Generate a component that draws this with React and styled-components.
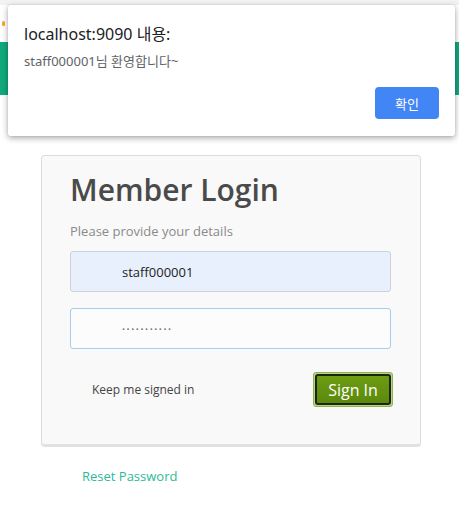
import React from "react";
import styled, { createGlobalStyle } from "styled-components";

const GlobalStyle = createGlobalStyle`
  html, body {
    margin: 0;
    padding: 0;
    background: #ffffff;
  }
  body {
    font-family: "Open Sans", "Noto Sans", sans-serif;
  }
`;

const App = () => {
  return (
    <Page>
      <GlobalStyle />
      <TopStrip />
      <Header>
        <Dot />
      </Header>
      <NavBar />
      <Main>
        <LoginCard>
          <Title>Member Login</Title>
          <Subtitle>Please provide your details</Subtitle>
          <Field autofilled>
            <FieldText>staff000001</FieldText>
          </Field>
          <Field focused>
            <FieldText dots>•••••••••••</FieldText>
          </Field>
          <ActionRow>
            <KeepLabel>Keep me signed in</KeepLabel>
            <SignInOuter>
              <SignInButton>Sign In</SignInButton>
            </SignInOuter>
          </ActionRow>
        </LoginCard>
        <ResetLink>Reset Password</ResetLink>
      </Main>

      <Alert>
        <AlertTitle>localhost:9090 내용:</AlertTitle>
        <AlertMessage>staff000001님 환영합니다~</AlertMessage>
        <AlertFooter>
          <AlertButton>확인</AlertButton>
        </AlertFooter>
      </Alert>
    </Page>
  );
};

export default App;

const Page = styled.div`
  position: relative;
  width: 459px;
  height: 514px;
  overflow: hidden;
  background: #ffffff;
`;

const TopStrip = styled.div`
  height: 5px;
  background: #f1f3f4;
`;

const Header = styled.div`
  height: 37px;
  display: flex;
  align-items: center;
  padding-left: 2px;
`;

const Dot = styled.div`
  width: 3px;
  height: 5px;
  border-radius: 2px;
  background: #f5a623;
`;

const NavBar = styled.div`
  height: 53px;
  background: #11a97c;
`;

const Main = styled.div`
  padding: 60px 0 0 41px;
`;

const LoginCard = styled.div`
  width: 350px;
  padding: 14px 0 37px 28px;
  background: #f9f9f9;
  border: 1px solid #dcdcdc;
  border-bottom: 3px solid #e2e2e2;
  border-radius: 4px;
`;

const Title = styled.h1`
  margin: 0;
  font-family: "Open Sans", sans-serif;
  font-size: 30px;
  line-height: 40px;
  font-weight: 600;
  color: #4a4a4a;
`;

const Subtitle = styled.p`
  margin: 12px 0 0;
  font-size: 13px;
  line-height: 18px;
  color: #8a8a8a;
`;

const Field = styled.div`
  box-sizing: border-box;
  width: 321px;
  height: 41px;
  margin-top: ${(p) => (p.focused ? "16px" : "11px")};
  display: flex;
  align-items: center;
  padding-left: 51px;
  border-radius: 3px;
  border: 1px solid ${(p) => (p.focused ? "#a6cdee" : "#cfd3d8")};
  background: ${(p) => (p.autofilled ? "#e8f0fe" : "#fcfcfc")};
`;

const FieldText = styled.span`
  font-size: ${(p) => (p.dots ? "8px" : "13px")};
  letter-spacing: ${(p) => (p.dots ? "1.6px" : "0")};
  color: ${(p) => (p.dots ? "#777" : "#222")};
`;

const ActionRow = styled.div`
  display: flex;
  align-items: center;
  justify-content: space-between;
  width: 323px;
  margin-top: 23px;
`;

const KeepLabel = styled.span`
  margin-left: 22px;
  font-size: 12px;
  color: #444;
`;

const SignInOuter = styled.div`
  padding: 1px;
  border: 1px solid #8db34a;
  border-radius: 3px;
  background: #b9d48a;
`;

const SignInButton = styled.button`
  display: block;
  width: 76px;
  height: 31px;
  padding: 0;
  border: 2px solid #1d2410;
  border-radius: 3px;
  background: linear-gradient(#6d9c15, #5c890c);
  color: #ffffff;
  font-family: "Open Sans", sans-serif;
  font-size: 16px;
  cursor: pointer;
`;

const ResetLink = styled.a`
  display: block;
  margin: 20px 0 0 41px;
  font-size: 13px;
  color: #2fb99a;
  text-decoration: none;
`;

const Alert = styled.div`
  position: absolute;
  top: 5px;
  left: 8px;
  box-sizing: border-box;
  width: 447px;
  height: 131px;
  padding: 18px 16px 0 16px;
  background: #ffffff;
  border-radius: 2px;
  box-shadow: 0 2px 6px rgba(0, 0, 0, 0.35), 0 0 1px rgba(0, 0, 0, 0.3);
  font-family: "Segoe UI", "Noto Sans", "Noto Sans CJK KR", sans-serif;
`;

const AlertTitle = styled.div`
  font-size: 16px;
  line-height: 22px;
  color: #202124;
`;

const AlertMessage = styled.div`
  margin-top: 7px;
  font-size: 13px;
  line-height: 18px;
  color: #5f6368;
`;

const AlertFooter = styled.div`
  display: flex;
  justify-content: flex-end;
  margin-top: 17px;
`;

const AlertButton = styled.button`
  width: 64px;
  height: 32px;
  border: none;
  border-radius: 4px;
  background: #4285f4;
  color: #ffffff;
  font-family: "Noto Sans CJK KR", sans-serif;
  font-size: 13px;
`;
